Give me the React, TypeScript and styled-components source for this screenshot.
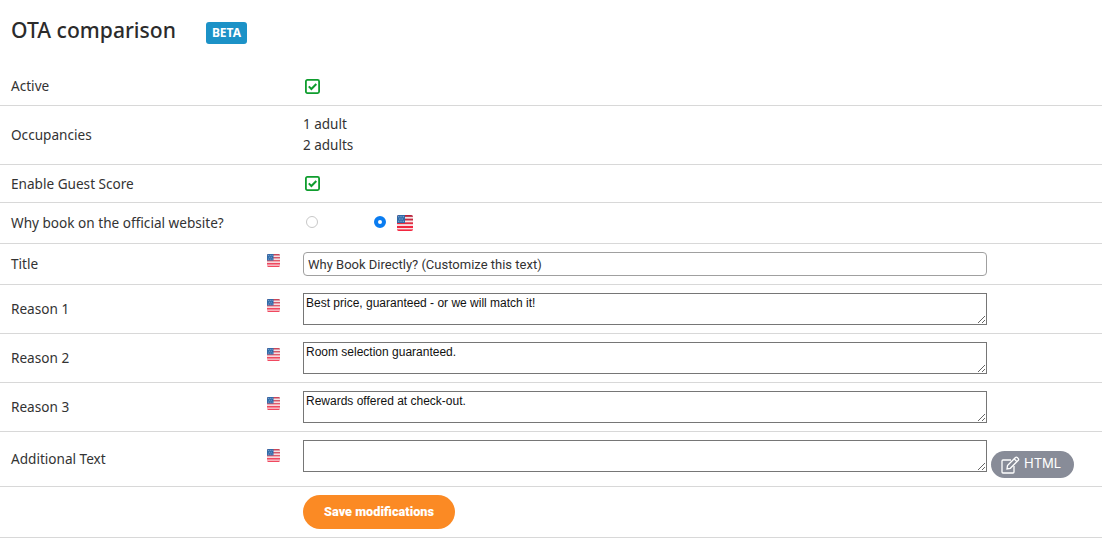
import React from "react";
import styled, { createGlobalStyle } from "styled-components";

const Global = createGlobalStyle`
  html, body { margin: 0; padding: 0; background: #fff; }
  body { font-family: "Noto Sans", sans-serif; color: #333; }
`;
const Page = styled.div`
  width: 1102px;
  height: 548px;
  overflow: hidden;
`;
const Header = styled.div`
  display: flex;
  align-items: center;
  height: 67px;
  padding: 0 0 8px 11px;
  box-sizing: border-box;
`;
const Title = styled.h1`
  margin: 0;
  font-family: "Noto Sans", sans-serif;
  font-size: 21.1px;
  font-weight: 500;
  line-height: 28px;
  color: #2b2b2b;
`;
const Badge = styled.span`
  margin: 7px 0 0 30px;
  width: 41px;
  height: 22px;
  border-radius: 3px;
  background: #1c92c7;
  color: #fff;
  font-family: "Noto Sans", sans-serif;
  font-size: 12px;
  font-weight: 700;
  line-height: 22px;
  text-align: center;
`;
const Row = styled.div<{ $h: number }>`
  display: flex;
  align-items: center;
  height: ${(p) => p.$h}px;
  box-sizing: border-box;
  border-bottom: 1px solid #d8d8d8;
`;
const Label = styled.div`
  width: 256px;
  flex: none;
  padding-left: 11px;
  box-sizing: border-box;
  font-family: "Noto Sans", sans-serif;
  font-size: 13.6px;
  line-height: 18px;
  color: #333;
`;
const FlagCell = styled.div`
  width: 47px;
  flex: none;
  display: flex;
  padding-left: 11px;
  box-sizing: border-box;
  margin-top: -7px;
`;
const Value = styled.div`
  flex: 1;
  min-width: 0;
  display: flex;
  align-items: center;
`;
const Lines = styled.div`
  font-family: "Noto Sans", sans-serif;
  font-size: 13.5px;
  line-height: 21px;
  color: #333;
`;
const Check = styled.svg`
  display: block;
  margin-left: 2px;
`;
const RadioOff = styled.span`
  display: block;
  width: 12px;
  height: 12px;
  margin: -2px 0 0 3px;
  border-radius: 50%;
  border: 1px solid #c8c8c8;
  box-sizing: border-box;
  background: #fff;
`;
const RadioOn = styled.span`
  display: block;
  width: 12px;
  height: 12px;
  margin: -2px 0 0 56px;
  border-radius: 50%;
  border: 4px solid #0a7cf0;
  box-sizing: border-box;
  background: #fff;
`;
const RadioFlag = styled.span`
  display: flex;
  margin-left: 11px;
`;
const TextInput = styled.input`
  width: 684px;
  height: 24px;
  margin: 0;
  padding: 0 4px;
  box-sizing: border-box;
  border: 1px solid #a0a0a0;
  border-radius: 4px;
  outline: none;
  font-family: "Roboto", sans-serif;
  font-size: 13px;
  color: #333;
`;
const Area = styled.textarea<{ $lifted?: boolean }>`
  display: block;
  width: 684px;
  height: 32px;
  margin: 0 0 ${(p) => (p.$lifted ? 6 : 0)}px;
  padding: 3px 2px;
  box-sizing: border-box;
  border: 1px solid #767676;
  border-radius: 0;
  outline: none;
  font-family: "Liberation Sans", Arial, sans-serif;
  font-size: 12px;
  line-height: 13px;
  color: #111;
`;
const HtmlButton = styled.button`
  display: flex;
  align-items: center;
  gap: 4px;
  width: 83px;
  height: 27px;
  margin: 11px 0 0 4px;
  padding: 0 0 0 10px;
  box-sizing: border-box;
  border: 0;
  border-radius: 14px;
  background: #888c98;
  color: #fff;
  font-family: "Inter", sans-serif;
  font-size: 13px;
  font-weight: 400;
`;
const HtmlText = styled.span`
  margin-top: -3px;
`;
const SaveButton = styled.button`
  width: 152px;
  height: 34px;
  margin: 0;
  padding: 0 0 2px;
  border: 0;
  border-radius: 17px;
  background: #fb8a24;
  color: #fff;
  font-family: "Roboto", sans-serif;
  font-size: 12.7px;
  font-weight: 900;
`;

let flagId = 0;
const Flag = ({ w = 13, h = 13, soft = true }: { w?: number; h?: number; soft?: boolean }) => {
  const id = `f${flagId++}`;
  return (
    <svg width={w} height={h} viewBox="0 0 14 14">
      <defs>
        <clipPath id={id}>
          <rect width="14" height="14" rx="1.5" />
        </clipPath>
      </defs>
      <g clipPath={`url(#${id})`}>
        <rect width="14" height="14" fill="#f7e6e8" />
        <rect y="0" width="14" height="1.6" fill={soft ? "#c9485a" : "#b8233a"} />
        <rect y="3.2" width="14" height="1.6" fill={soft ? "#d2596a" : "#c42a40"} />
        <rect y="6.4" width="14" height="1.6" fill={soft ? "#e35a6b" : "#e02c42"} />
        <rect y="9.6" width="14" height="1.8" fill={soft ? "#f0485f" : "#f2263f"} />
        <rect y="12.6" width="14" height="1.4" fill={soft ? "#f0485f" : "#f2263f"} />
        <rect width="7" height="7" fill="#2f6aa8" />
        <rect x="1" y="1" width="1" height="1" fill="#8fb0d8" />
        <rect x="3" y="1" width="1" height="1" fill="#8fb0d8" />
        <rect x="5" y="1" width="1" height="1" fill="#8fb0d8" />
        <rect x="2" y="3" width="1" height="1" fill="#8fb0d8" />
        <rect x="4" y="3" width="1" height="1" fill="#8fb0d8" />
        <rect x="1" y="5" width="1" height="1" fill="#8fb0d8" />
        <rect x="3" y="5" width="1" height="1" fill="#8fb0d8" />
        <rect x="5" y="5" width="1" height="1" fill="#8fb0d8" />
      </g>
    </svg>
  );
};

const GreenCheck = () => (
  <Check width="15" height="15" viewBox="0 0 15 15">
    <rect x="0.9" y="0.9" width="13.2" height="13.2" rx="1.5" fill="#fff" stroke="#0f9d2e" strokeWidth="1.8" />
    <path d="M3.8 7.4 L6.4 10 L11.3 5" fill="none" stroke="#0f9d2e" strokeWidth="2" />
  </Check>
);

const EditIcon = () => (
  <svg width="19" height="18" viewBox="0 0 19 18" fill="none" stroke="#fff" strokeWidth="1.3">
    <path d="M10 4 H2 a1 1 0 0 0 -1 1 V16 a1 1 0 0 0 1 1 H12 a1 1 0 0 0 1 -1 V10" />
    <path d="M6.5 9.5 L14.5 1.5 a1.2 1.2 0 0 1 1.7 0 L17.3 2.6 a1.2 1.2 0 0 1 0 1.7 L9.3 12.3 L6 13 Z" />
    <path d="M13.3 3 L15.9 5.6" />
  </svg>
);

const reasons: [string, string, number][] = [
  ["Reason 1", "Best price, guaranteed - or we will match it!", 49],
  ["Reason 2", "Room selection guaranteed.", 49],
  ["Reason 3", "Rewards offered at check-out.", 49],
];

export default function App() {
  return (
    <Page>
      <Global />
      <Header>
        <Title>OTA comparison</Title>
        <Badge>BETA</Badge>
      </Header>
      <Row $h={39}>
        <Label>Active</Label>
        <FlagCell />
        <Value>
          <GreenCheck />
        </Value>
      </Row>
      <Row $h={59}>
        <Label>Occupancies</Label>
        <FlagCell />
        <Value>
          <Lines>
            1 adult
            <br />2 adults
          </Lines>
        </Value>
      </Row>
      <Row $h={38}>
        <Label>Enable Guest Score</Label>
        <FlagCell />
        <Value>
          <GreenCheck />
        </Value>
      </Row>
      <Row $h={41}>
        <Label>Why book on the official website?</Label>
        <FlagCell />
        <Value>
          <RadioOff />
          <RadioOn />
          <RadioFlag>
            <Flag w={16} h={16} soft={false} />
          </RadioFlag>
        </Value>
      </Row>
      <Row $h={41}>
        <Label>Title</Label>
        <FlagCell>
          <Flag />
        </FlagCell>
        <Value>
          <TextInput readOnly value="Why Book Directly? (Customize this text)" />
        </Value>
      </Row>
      {reasons.map(([label, text, h]) => (
        <Row $h={h} key={label}>
          <Label>{label}</Label>
          <FlagCell>
            <Flag />
          </FlagCell>
          <Value>
            <Area readOnly value={text} />
          </Value>
        </Row>
      ))}
      <Row $h={55}>
        <Label>Additional Text</Label>
        <FlagCell>
          <Flag />
        </FlagCell>
        <Value>
          <Area $lifted readOnly value="" />
          <HtmlButton>
            <EditIcon />
            <HtmlText>HTML</HtmlText>
          </HtmlButton>
        </Value>
      </Row>
      <Row $h={51}>
        <Label />
        <FlagCell />
        <Value>
          <SaveButton>Save modifications</SaveButton>
        </Value>
      </Row>
    </Page>
  );
}
